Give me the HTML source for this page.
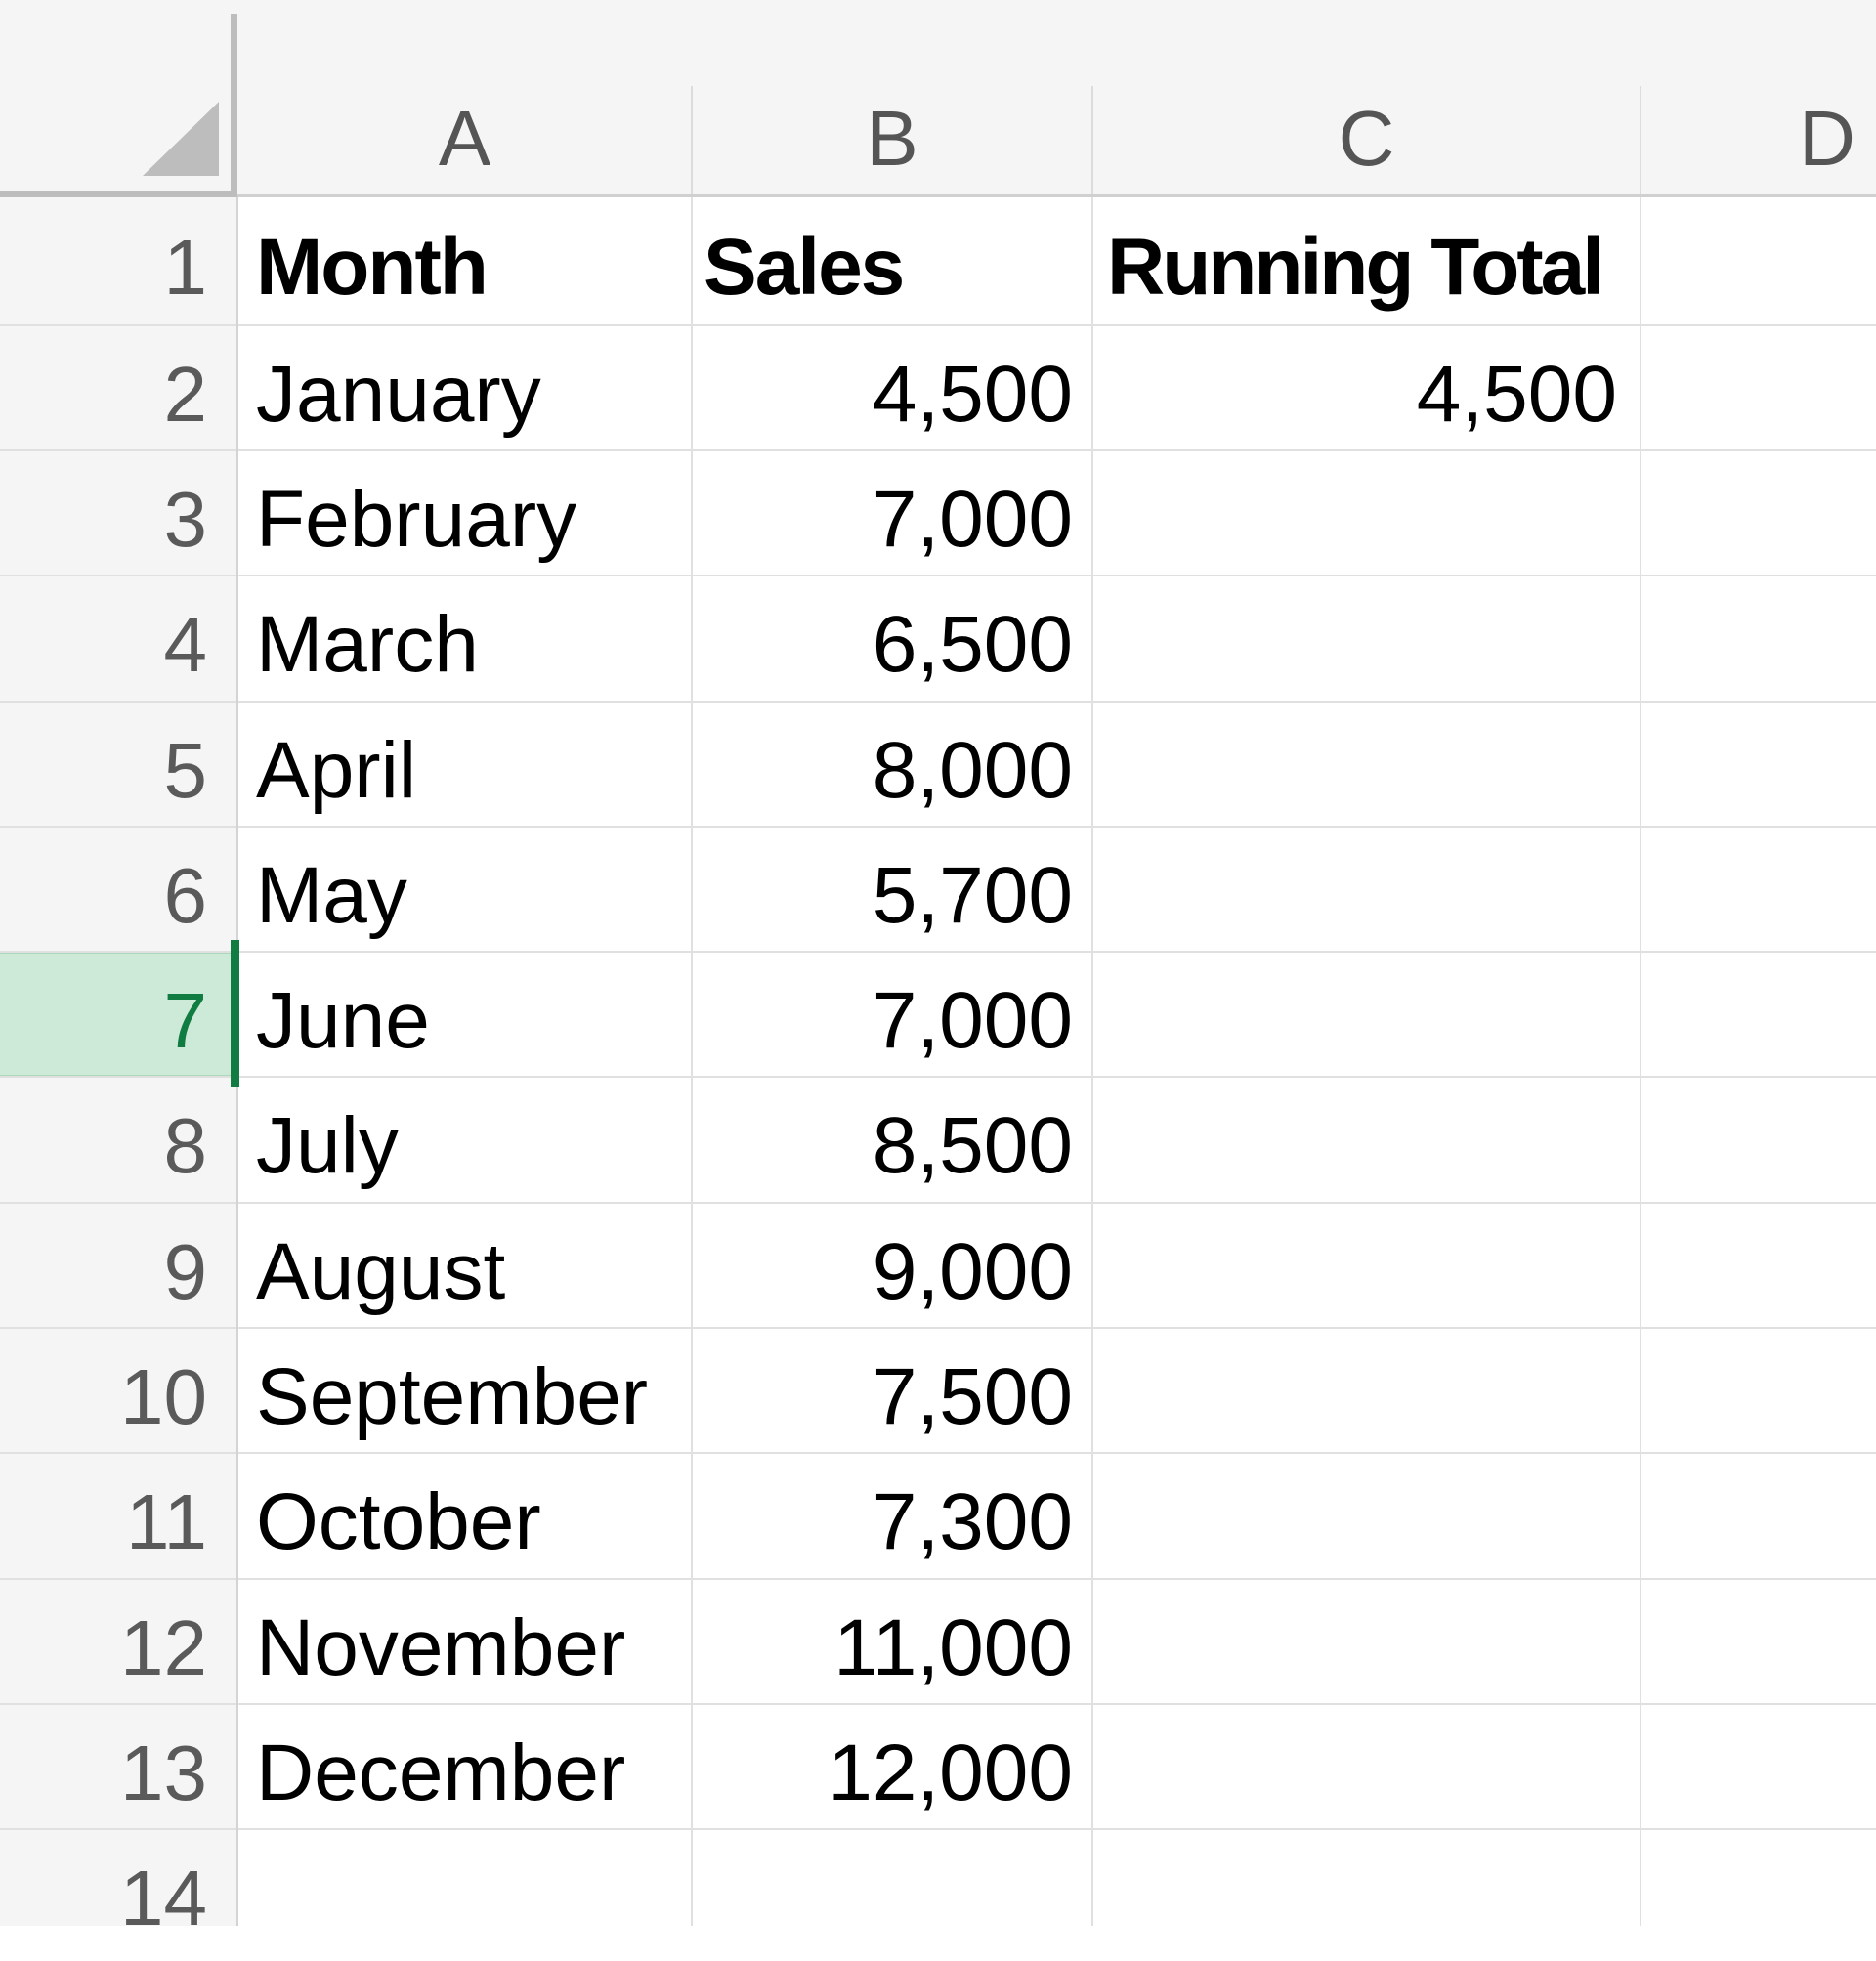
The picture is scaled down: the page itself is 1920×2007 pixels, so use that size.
<!DOCTYPE html>
<html><head><style>
body{margin:0;width:1920px;height:1971px;overflow:hidden;background:#fff;position:relative;font-family:"Liberation Sans",sans-serif;}
.a{position:absolute}
.hl{position:absolute;left:0;width:1920px;height:2px;background:#e0e0e0}
.vl{position:absolute;top:200px;height:1771px;width:2px;background:#e0e0e0}
.rn{position:absolute;left:0;width:212px;text-align:right;font-size:80px;color:#5a5a5a;line-height:128px}
.c{position:absolute;font-size:82px;line-height:128px;color:#000;white-space:nowrap}
.r{text-align:right}
.ch{position:absolute;top:92px;font-size:80px;color:#555;line-height:100px;text-align:center}
</style></head><body>
<div class="a" style="left:0;top:0;width:1920px;height:201px;background:#f5f5f5"></div>
<div class="a" style="left:0;top:201px;width:243px;height:1770px;background:#f5f5f5"></div>
<div class="a" style="left:0;top:974px;width:236px;height:128px;background:#cde9d8;border-top:2px solid #a9d9bb;border-bottom:2px solid #a9d9bb;box-sizing:border-box"></div>
<div class="hl" style="top:332px"></div><div class="hl" style="top:460px"></div><div class="hl" style="top:588px"></div><div class="hl" style="top:717px"></div><div class="hl" style="top:845px"></div><div class="hl" style="top:973px"></div><div class="hl" style="top:1101px"></div><div class="hl" style="top:1230px"></div><div class="hl" style="top:1358px"></div><div class="hl" style="top:1486px"></div><div class="hl" style="top:1615px"></div><div class="hl" style="top:1743px"></div><div class="hl" style="top:1871px"></div>
<div class="vl" style="left:707px"></div><div class="vl" style="left:1117px"></div><div class="vl" style="left:1678px"></div>
<div class="a" style="left:707px;top:88px;width:2px;height:112px;background:#dcdcdc"></div>
<div class="a" style="left:1117px;top:88px;width:2px;height:112px;background:#dcdcdc"></div>
<div class="a" style="left:1678px;top:88px;width:2px;height:112px;background:#dcdcdc"></div>
<div class="a" style="left:242px;top:200px;width:2px;height:1771px;background:#d4d4d4"></div>
<div class="a" style="left:240px;top:199px;width:1680px;height:3px;background:#d0d0d0"></div>
<div class="a" style="left:0;top:195px;width:242px;height:7px;background:#bdbdbd"></div>
<div class="a" style="left:236px;top:14px;width:7px;height:188px;background:#bdbdbd"></div>
<svg class="a" style="left:0;top:0" width="240" height="200"><polygon points="224,104 224,180 146,180" fill="#bdbdbd"/></svg>
<div class="a" style="left:236px;top:962px;width:9px;height:150px;background:#107c41"></div>
<div class="ch" style="left:244px;width:463px">A</div>
<div class="ch" style="left:709px;width:408px">B</div>
<div class="ch" style="left:1119px;width:559px">C</div>
<div class="ch" style="left:1840px;width:60px">D</div>
<div class="rn" style="top:210px">1</div><div class="rn" style="top:340px">2</div><div class="rn" style="top:468px">3</div><div class="rn" style="top:596px">4</div><div class="rn" style="top:725px">5</div><div class="rn" style="top:853px">6</div><div class="rn" style="top:981px;color:#107c41">7</div><div class="rn" style="top:1109px">8</div><div class="rn" style="top:1238px">9</div><div class="rn" style="top:1366px">10</div><div class="rn" style="top:1494px">11</div><div class="rn" style="top:1623px">12</div><div class="rn" style="top:1751px">13</div><div class="rn" style="top:1879px">14</div>
<div class="c" style="left:262px;top:210px;font-weight:bold;letter-spacing:-2px">Month</div>
<div class="c" style="left:262px;top:340px">January</div>
<div class="c" style="left:262px;top:468px">February</div>
<div class="c" style="left:262px;top:596px">March</div>
<div class="c" style="left:262px;top:725px">April</div>
<div class="c" style="left:262px;top:853px">May</div>
<div class="c" style="left:262px;top:981px">June</div>
<div class="c" style="left:262px;top:1109px">July</div>
<div class="c" style="left:262px;top:1238px">August</div>
<div class="c" style="left:262px;top:1366px">September</div>
<div class="c" style="left:262px;top:1494px">October</div>
<div class="c" style="left:262px;top:1623px">November</div>
<div class="c" style="left:262px;top:1751px">December</div>
<div class="c" style="left:720px;top:210px;font-weight:bold;letter-spacing:-2px">Sales</div>
<div class="c r" style="right:822px;top:340px">4,500</div>
<div class="c r" style="right:822px;top:468px">7,000</div>
<div class="c r" style="right:822px;top:596px">6,500</div>
<div class="c r" style="right:822px;top:725px">8,000</div>
<div class="c r" style="right:822px;top:853px">5,700</div>
<div class="c r" style="right:822px;top:981px">7,000</div>
<div class="c r" style="right:822px;top:1109px">8,500</div>
<div class="c r" style="right:822px;top:1238px">9,000</div>
<div class="c r" style="right:822px;top:1366px">7,500</div>
<div class="c r" style="right:822px;top:1494px">7,300</div>
<div class="c r" style="right:822px;top:1623px">11,000</div>
<div class="c r" style="right:822px;top:1751px">12,000</div>
<div class="c" style="left:1133px;top:210px;font-weight:bold;letter-spacing:-3px">Running Total</div>
<div class="c r" style="right:265px;top:340px">4,500</div>
</body></html>
